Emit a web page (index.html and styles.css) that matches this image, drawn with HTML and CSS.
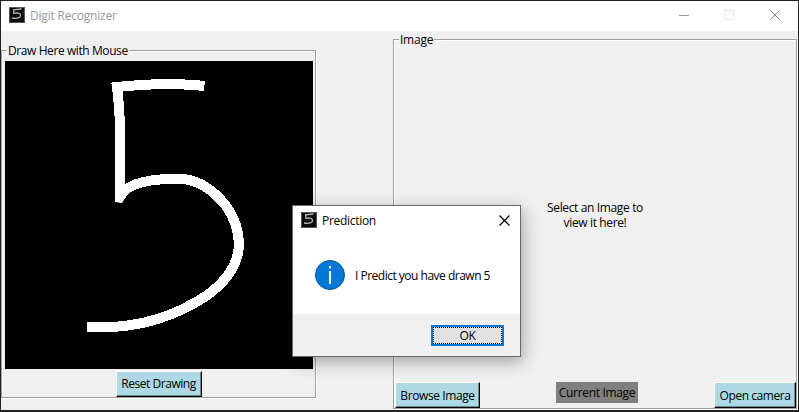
FILE: index.html
```
<!DOCTYPE html>
<html lang="en">
<head>
<meta charset="utf-8">
<title>Digit Recognizer</title>
<link rel="stylesheet" href="styles.css">
</head>
<body>
<svg class="defs" width="0" height="0">
  <symbol id="app-icon" viewBox="0 0 16 16">
    <rect width="16" height="16" fill="#555"/>
    <rect x="1" y="1" width="14" height="14" fill="#0c0c0c"/>
    <path d="M12.500 2 4.500 2.800 5 6.500c3-1 6.500-.5 6.500 2S8.500 11.800 3 11" fill="none" stroke="#b4b4b4" stroke-width="1.300"/>
  </symbol>
</svg>
<div class="window">
  <header class="titlebar">
    <svg class="app-icon" width="16" height="16"><use href="#app-icon"/></svg>
    <span class="title">Digit Recognizer</span>
    <svg class="controls" width="102" height="11" viewBox="0 0 102 11" fill="none" shape-rendering="crispEdges">
      <path d="M0 5.500h10" stroke="#999"/>
      <rect x="45.500" y=".5" width="9" height="9" stroke="#e6e6e6"/>
      <path d="M91.500.5l9 9M100.500.5l-9 9" stroke="#888" shape-rendering="auto"/>
    </svg>
  </header>
  <main class="content">
    <section class="group draw">
      <h2 class="legend t-draw">Draw Here with Mouse</h2>
      <svg class="canvas" width="308" height="308" viewBox="5 61 308 308">
        <path d="M199.500 85.500Q160 82 117 87Q120 109 120 130V197Q128 180 170 179Q202 175 226 206Q239 224 239 246Q237 274 206 296Q154 330 92 327" fill="none" stroke="#fff" stroke-width="10" stroke-linecap="square" shape-rendering="crispEdges"/>
        <path d="M115 190h10v8l-3 5-7-1z" fill="#fff"/>
      </svg>
      <button class="btn t-reset">Reset Drawing</button>
    </section>
    <section class="group image">
      <h2 class="legend t-image">Image</h2>
      <p class="hint">Select an Image to<br>view it here!</p>
      <div class="actions">
        <button class="btn t-browse">Browse Image</button>
        <span class="current">Current Image</span>
        <button class="btn t-camera">Open camera</button>
      </div>
    </section>
  </main>
</div>
<div class="dialog">
  <div class="dialog-title">
    <svg class="app-icon" width="16" height="16"><use href="#app-icon"/></svg>
    <span class="t-pred">Prediction</span>
    <svg class="close" width="11" height="11" viewBox="0 0 11 11"><path d="M.5.5l10 10M10.500.5l-10 10" stroke="#000" stroke-width="1.200" fill="none"/></svg>
  </div>
  <div class="dialog-body">
    <svg width="30" height="30" viewBox="0 0 30 30">
      <circle cx="15" cy="15" r="14.500" fill="#0078d7" stroke="#00539c"/>
      <path d="M14 6h2v2.500h-2zM14 11h2v13h-2z" fill="#fff"/>
    </svg>
    <span class="t-msg">I Predict you have drawn 5</span>
  </div>
  <div class="dialog-footer"><button class="ok"><span>OK</span></button></div>
</div>
</body>
</html>
```
FILE: styles.css
```
* { box-sizing: border-box; }
body {
  margin: 0;
  width: 799px;
  height: 412px;
  padding: 1px 1px 2px;
  overflow: hidden;
  background: #242324;
  font: 12px/15px "Open Sans", "Noto Sans", sans-serif;
  color: #000;
  white-space: nowrap;
}
.defs { position: absolute; }
svg { display: block; flex: none; }
h2, p { margin: 0; font: inherit; }
button { font: inherit; color: inherit; padding: 0; border-radius: 0; }
.window { height: 409px; background: #f0f0f0; }
.titlebar {
  display: flex;
  height: 30px;
  padding: 6px 17px 0 8px;
  background: #fff;
  color: #999;
}
.title { margin: 1px 0 0 5px; letter-spacing: -.2px; }
.controls { margin: 3px 0 0 auto; }
.content { display: flex; justify-content: space-between; padding: 0 1px 0 0; }
.group {
  display: flex;
  flex-direction: column;
  border: 1px solid #a0a0a0;
  box-shadow: 1px 1px 0 #fff, inset 1px 1px 0 #fff;
}
.draw { width: 315px; height: 348px; margin-top: 19px; align-items: center; }
.image { width: 404px; height: 370px; margin-top: 8px; }
.legend {
  align-self: flex-start;
  height: 15px;
  margin: -8px 0 0 5px;
  padding: 0 1px;
  background: #f0f0f0;
}
.t-draw { letter-spacing: -.41px; }
.image .legend { margin-top: -7px; letter-spacing: -.25px; line-height: 14px; }
.canvas { margin: 3px 0 2px; background: #000; }
.btn {
  height: 26px;
  border: 1px solid;
  border-color: #fff #000 #000 #fff;
  background: #add8e6;
  box-shadow: inset -1px -1px 0 #6d8992;
}
.t-reset { width: 86px; padding-bottom: 1px; letter-spacing: -.45px; }
.t-browse { width: 85px; letter-spacing: -.4px; }
.t-camera { width: 82px; letter-spacing: -.45px; }
.hint { margin-top: 152px; padding-right: 0; text-align: center; letter-spacing: -.36px; }
.actions {
  display: flex;
  justify-content: space-between;
  align-items: flex-start;
  margin: auto 0 0 1px;
}
.current {
  width: 82px;
  height: 21px;
  padding-top: 3px;
  background: #808080;
  text-align: center;
  letter-spacing: -.33px;
}
.dialog {
  position: absolute;
  left: 292px;
  top: 205px;
  width: 229px;
  height: 152px;
  display: flex;
  flex-direction: column;
  border: 1px solid #686868;
  background: #fff;
  box-shadow: 2px 5px 16px rgba(0, 0, 0, .32);
}
.dialog-title { display: flex; padding: 6px 10px 0 8px; }
.t-pred { margin: 1px 0 0 5px; letter-spacing: -.3px; }
.close { margin: 3px 0 0 auto; }
.dialog-body { display: flex; align-items: center; gap: 10px; padding: 32px 0 0 22px; }
.t-msg { letter-spacing: -.5px; }
.dialog-footer {
  display: flex;
  justify-content: flex-end;
  height: 42px;
  margin-top: auto;
  padding: 11px 16px 0 0;
  background: #f0f0f0;
}
.ok { width: 73px; height: 21px; padding: 0; border: 2px solid #0078d7; background: #e1e1e1; letter-spacing: -.4px; }
.ok span { display: block; height: 17px; border: 1px dotted #000; }
```
